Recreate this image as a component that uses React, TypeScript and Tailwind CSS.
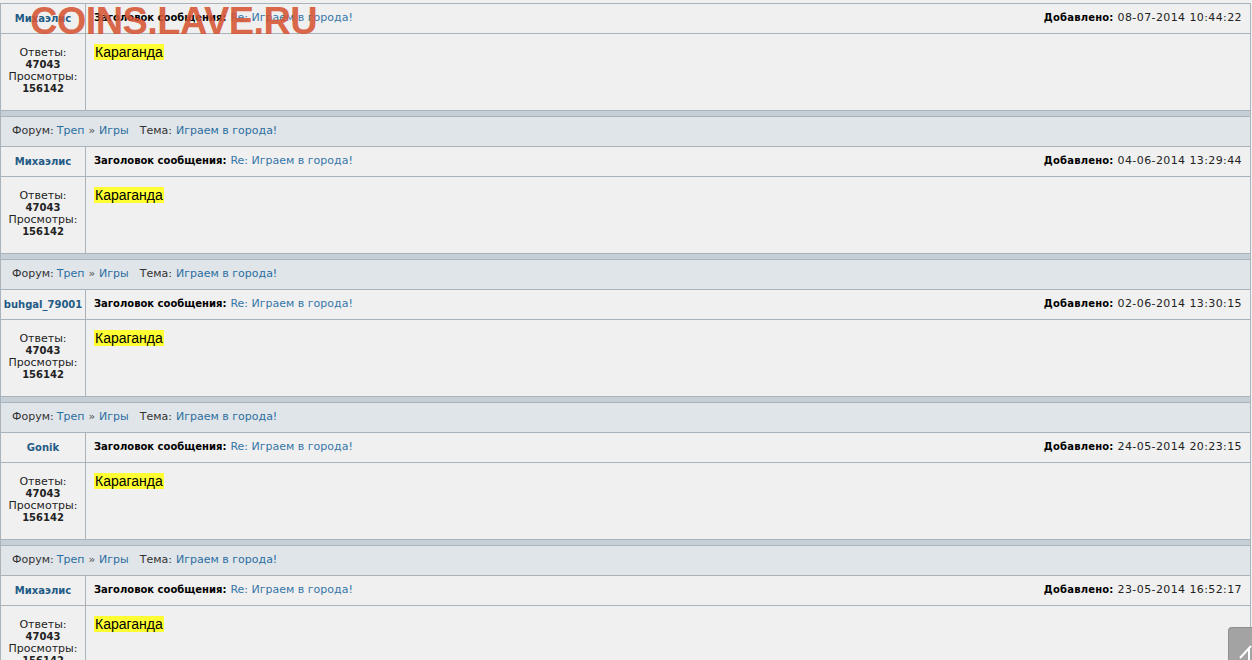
import React from 'react';

const posts = [
  { author: 'Михаэлис', date: '08-07-2014 10:44:22', first: true },
  { author: 'Михаэлис', date: '04-06-2014 13:29:44' },
  { author: 'buhgal_79001', date: '02-06-2014 13:30:15' },
  { author: 'Gonik', date: '24-05-2014 20:23:15' },
  { author: 'Михаэлис', date: '23-05-2014 16:52:17' },
];

const verdana = { fontFamily: '"DejaVu Sans", Verdana, sans-serif' };

export default function App() {
  return (
    <div className="relative w-[1252px] h-[660px] overflow-hidden bg-[#f0f0f0] text-[11px]" style={verdana}>
      <div className="h-[3px] bg-[#f0f0f0]" />
      <div className="w-[1251px] border-l border-r border-[#a9b3bb]">
        {posts.map((p, i) => (
          <div key={i}>
            {!p.first && (
              <>
                <div className="h-[6px] bg-[#c7cfd6] border-b border-[#a9b3bb]" />
                <div className="h-[30px] bg-[#e0e5e9] border-b border-[#a9b3bb] flex items-center pl-[11px] text-[#333]">
                  <span>Форум: </span>
                  <span className="text-[#2c6ea0] ml-[3px]">Треп</span>
                  <span className="text-[#555] mx-[4px]">»</span>
                  <span className="text-[#2c6ea0]">Игры</span>
                  <span className="ml-[11px]">Тема: </span>
                  <span className="text-[#2c6ea0] ml-[4px]">Играем в города!</span>
                </div>
              </>
            )}
            <div className={`flex border-b border-[#a9b3bb] ${p.first ? 'border-t' : ''}`}>
              <div className="w-[85px] shrink-0 h-[29px] border-r border-[#a9b3bb] flex items-center justify-center font-bold text-[10px] text-[#1f5b85]">
                {p.author}
              </div>
              <div className="flex-1 flex items-center justify-between pl-[8px] pr-[8px]">
                <div>
                  <span className="font-bold text-[10px] text-black">Заголовок сообщения:</span>
                  <span className="text-[#3676a8] ml-[4px]">Re: Играем в города!</span>
                </div>
                <div>
                  <span className="font-bold text-[10px] text-black tracking-[0.2px]">Добавлено:</span>
                  <span className="text-[#222] ml-[4px] tracking-[0.4px]">{p.date}</span>
                </div>
              </div>
            </div>
            <div className="flex h-[76px]">
              <div className="w-[85px] shrink-0 border-r border-[#a9b3bb] pt-[13px] text-center leading-[12px] text-[#222]">
                <div>Ответы:</div>
                <div className="font-bold text-[10px]">47043</div>
                <div>Просмотры:</div>
                <div className="font-bold text-[10px]">156142</div>
              </div>
              <div className="flex-1 pl-[8px] pt-[10px]">
                <span
                  className="bg-[#ffff33] text-black text-[14px] leading-[16px] px-px inline-block"
                  style={{ fontFamily: '"Liberation Sans", Arial, sans-serif' }}
                >
                  Караганда
                </span>
              </div>
            </div>
            <div className="h-px bg-[#a9b3bb]" />
          </div>
        ))}
      </div>

      {/* watermark */}
      <div
        className="absolute left-[30px] top-[0px] text-[38px] font-bold leading-[42px] text-[#d65534]/90 tracking-[-0.6px] pointer-events-none"
        style={{ fontFamily: '"Liberation Sans", Arial, sans-serif' }}
      >
        COINS.LAVE.RU
      </div>

      {/* scroll to top */}
      <div className="absolute left-[1228px] top-[627px] w-[40px] h-[40px] bg-[#a3a3a3] rounded-tl-[4px] border-l border-t border-[#8f8f8f]">
        <svg width="30" height="40" viewBox="0 0 30 40" className="absolute left-0 top-0">
          <path d="M11 30 L22 18 M20 20 L20 40" stroke="#fff" strokeWidth="2" fill="none" />
        </svg>
      </div>
    </div>
  );
}
